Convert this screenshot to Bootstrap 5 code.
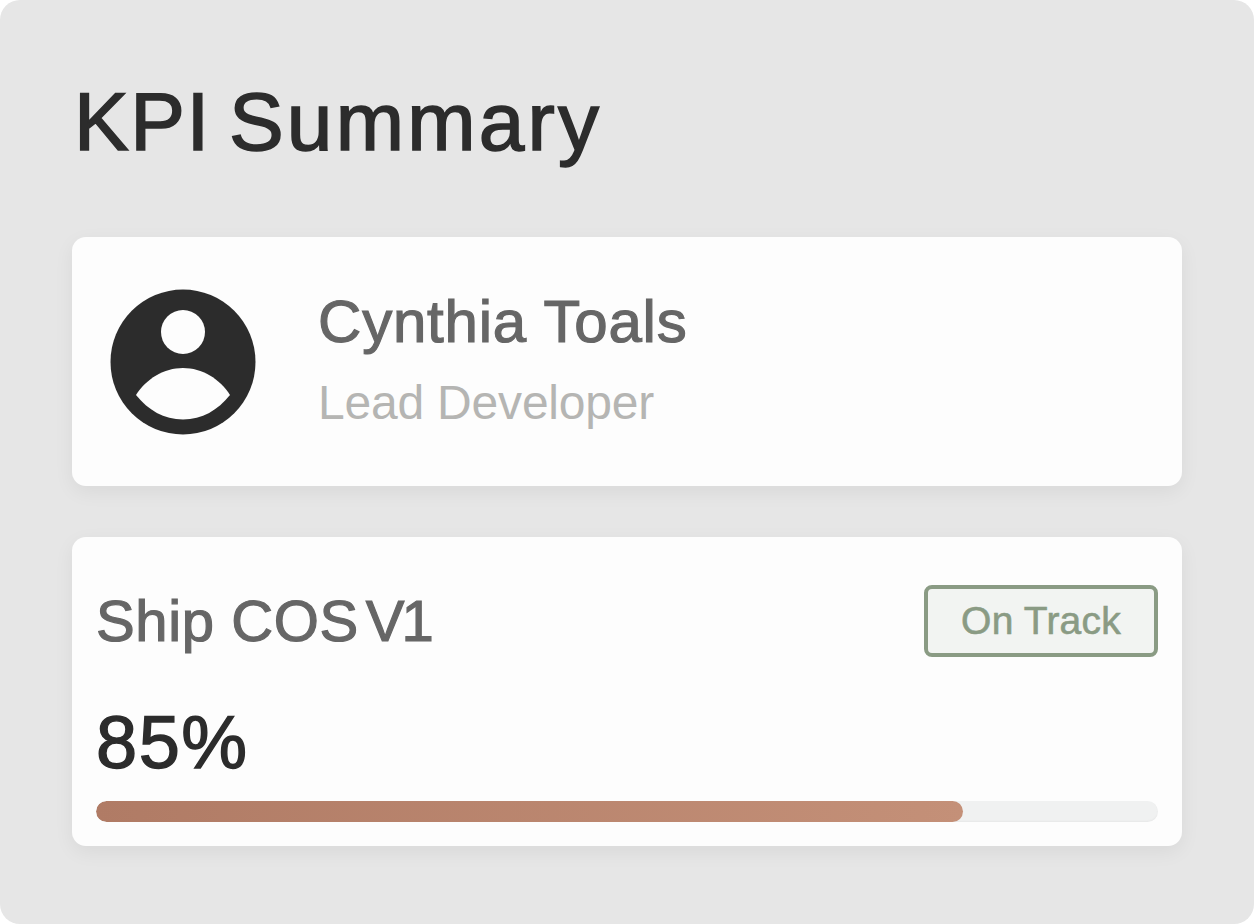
<!DOCTYPE html>
<html lang="en">
<head>
  <meta charset="UTF-8">
  <meta name="viewport" content="width=device-width, initial-scale=1.0">
  <title>KPI Summary</title>
  <link rel="stylesheet" href="https://cdn.jsdelivr.net/npm/bootstrap@5.3.0/dist/css/bootstrap.min.css">
  <style>
    body { background: #fff; font-family: "Liberation Sans", Arial, sans-serif; overflow: hidden; }
    .kpi-panel { height: 924px; background: #e6e6e6; border-radius: 20px; padding: 76px 72px 0; }
    .kpi-title { font-size: 82px; line-height: 92px; font-weight: 400; color: #2c2c2c; margin: 0 0 69px 2px; letter-spacing: 3.2px; word-spacing: -8px; -webkit-text-stroke: 1.6px #2c2c2c; }
    .kpi-abbr { letter-spacing: 1.6px; }
    .kpi-card { background: #fdfdfd; border: 0; border-radius: 14px; box-shadow: 0 6px 20px rgba(0,0,0,.06); }
    .person-card { height: 249px; padding-left: 38px; gap: 62px; margin-bottom: 51px; }
    .person-text { padding-bottom: 4px; }
    .person-name { font-size: 60px; line-height: 62px; color: #666; margin: 0 0 24px; letter-spacing: .8px; -webkit-text-stroke: 1.2px #666; }
    .person-role { font-size: 48px; line-height: 52px; color: #b5b5b3; margin: 0; letter-spacing: -.2px; }
    .goal-card { height: 309px; padding: 48px 24px 24px; }
    .goal-name { font-size: 58px; line-height: 72px; color: #666; margin: 0; letter-spacing: .6px; -webkit-text-stroke: 1.2px #666; }
    .goal-version { word-spacing: -6px; letter-spacing: -3px; }
    .goal-badge { width: 234px; height: 72px; border: 4px solid #8a9b84; border-radius: 8px; background: #f2f4f2; color: #8a9b84; font-size: 39px; letter-spacing: .2px; -webkit-text-stroke: .6px #8a9b84; }
    .goal-pct { font-size: 74px; line-height: 80px; color: #2c2c2c; margin: 46px 0 18px; letter-spacing: 1.5px; -webkit-text-stroke: 1.4px #2c2c2c; }
    .goal-track { height: 21px; background: #f0f1f1; border-radius: 11px; box-shadow: inset 0 -1px 2px rgba(0,0,0,.04); }
    .goal-bar { background: linear-gradient(90deg, #b07b65, #c49078); border-radius: 11px; }
  </style>
</head>
<body>
  <div class="kpi-panel">
    <h1 class="kpi-title"><span class="kpi-abbr">KPI</span> Summary</h1>

    <div class="card kpi-card person-card flex-row align-items-center">
      <svg width="146" height="146" viewBox="0 0 146 146" aria-hidden="true">
        <circle cx="73" cy="73" r="72.5" fill="#2c2c2c"/>
        <circle cx="73" cy="43" r="22" fill="#fdfdfd"/>
        <path d="M26 106C36 90 54 79 73 79C92 79 110 90 120 106C108 121 92 130.5 73 130.5C54 130.5 38 121 26 106Z" fill="#fdfdfd"/>
      </svg>
      <div class="person-text">
        <p class="person-name">Cynthia Toals</p>
        <p class="person-role">Lead Developer</p>
      </div>
    </div>

    <div class="card kpi-card goal-card">
      <div class="d-flex justify-content-between align-items-center">
        <p class="goal-name">Ship COS<span class="goal-version"> V1</span></p>
        <div class="goal-badge d-flex align-items-center justify-content-center">On Track</div>
      </div>
      <p class="goal-pct">85%</p>
      <div class="progress goal-track">
        <div class="progress-bar goal-bar" style="width: 81.6%"></div>
      </div>
    </div>
  </div>
  <script src="https://cdn.jsdelivr.net/npm/bootstrap@5.3.0/dist/js/bootstrap.bundle.min.js"></script>
</body>
</html>
